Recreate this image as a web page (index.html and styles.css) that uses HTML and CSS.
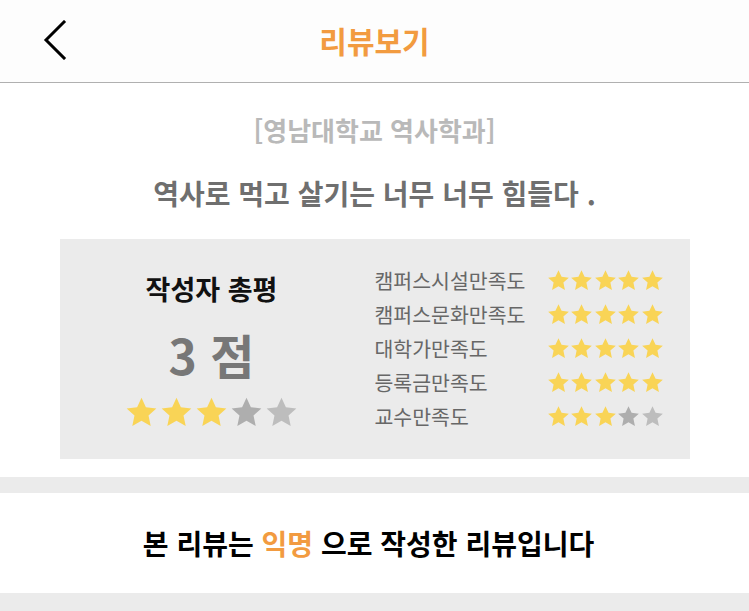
FILE: index.html
```html
<!DOCTYPE html>
<html lang="ko">
<head>
<meta charset="utf-8">
<link rel="stylesheet" href="styles.css">
</head>
<body>
<svg width="0" height="0" class="defs">
  <defs>
    <symbol id="star" viewBox="0 0 24 24">
      <polygon points="12,1.2 15.2,8.2 22.8,9 17.1,14.2 18.7,21.9 12,18 5.3,21.9 6.9,14.2 1.2,9 8.8,8.2"/>
    </symbol>
  </defs>
</svg>
<header class="topbar">
  <div class="back">
    <svg width="26" height="40" viewBox="0 0 26 40"><path d="M21 2 L3 20 L21 38" fill="none" stroke="#000" stroke-width="3" stroke-linecap="square" stroke-linejoin="miter"/></svg>
  </div>
  <h1 class="title">리뷰보기</h1>
  <div class="spacer"></div>
</header>
<main>
  <p class="school">[영남대학교 역사학과]</p>
  <p class="headline">역사로 먹고 살기는 너무 너무 힘들다 .</p>
  <section class="scorebox">
    <div class="overall">
      <div class="overall-label">작성자 총평</div>
      <div class="overall-score">3 점</div>
      <div class="stars big">
        <svg class="on"><use href="#star"/></svg><svg class="on"><use href="#star"/></svg><svg class="on"><use href="#star"/></svg><svg class="off1"><use href="#star"/></svg><svg class="off2"><use href="#star"/></svg>
      </div>
    </div>
    <div class="details">
      <div class="row"><span class="label">캠퍼스시설만족도</span><span class="stars small"><svg class="on"><use href="#star"/></svg><svg class="on"><use href="#star"/></svg><svg class="on"><use href="#star"/></svg><svg class="on"><use href="#star"/></svg><svg class="on"><use href="#star"/></svg></span></div>
      <div class="row"><span class="label">캠퍼스문화만족도</span><span class="stars small"><svg class="on"><use href="#star"/></svg><svg class="on"><use href="#star"/></svg><svg class="on"><use href="#star"/></svg><svg class="on"><use href="#star"/></svg><svg class="on"><use href="#star"/></svg></span></div>
      <div class="row"><span class="label">대학가만족도</span><span class="stars small"><svg class="on"><use href="#star"/></svg><svg class="on"><use href="#star"/></svg><svg class="on"><use href="#star"/></svg><svg class="on"><use href="#star"/></svg><svg class="on"><use href="#star"/></svg></span></div>
      <div class="row"><span class="label">등록금만족도</span><span class="stars small"><svg class="on"><use href="#star"/></svg><svg class="on"><use href="#star"/></svg><svg class="on"><use href="#star"/></svg><svg class="on"><use href="#star"/></svg><svg class="on"><use href="#star"/></svg></span></div>
      <div class="row"><span class="label">교수만족도</span><span class="stars small"><svg class="on"><use href="#star"/></svg><svg class="on"><use href="#star"/></svg><svg class="on"><use href="#star"/></svg><svg class="off1"><use href="#star"/></svg><svg class="off2"><use href="#star"/></svg></span></div>
    </div>
  </section>
</main>
<div class="band"></div>
<section class="notice">
  <p>본 리뷰는 <span class="accent">익명</span> 으로 작성한 리뷰입니다</p>
</section>
<div class="band last"></div>
</body>
</html>
```
FILE: styles.css
```css
html, body {
  margin: 0;
  padding: 0;
  background: #ffffff;
  font-family: "Noto Sans CJK KR", "Noto Sans", sans-serif;
  width: 749px;
  height: 611px;
  overflow: hidden;
}
.defs { position: absolute; }
.topbar {
  height: 82px;
  background: #fdfdfd;
  border-bottom: 1px solid #b0b0b0;
  display: grid;
  grid-template-columns: 1fr auto 1fr;
  align-items: center;
}
.back {
  padding-left: 43px;
  display: flex;
  align-items: center;
  padding-bottom: 2px;
}
.title {
  margin: 0;
  font-size: 30px;
  font-weight: 700;
  color: #f29b40;
  line-height: 40px;
  padding-bottom: 2px;
}
main {
  display: flex;
  flex-direction: column;
  align-items: center;
}
.school {
  margin: 30px 0 0;
  font-size: 26px;
  line-height: 34px;
  font-weight: 700;
  color: #b9b9b9;
}
.headline {
  margin: 28px 0 0;
  font-size: 28px;
  line-height: 36px;
  font-weight: 700;
  color: #6f6f6f;
}
.scorebox {
  margin-top: 28px;
  width: 630px;
  height: 220px;
  background: #ebebeb;
  display: flex;
  align-items: flex-start;
}
.overall {
  width: 304px;
  padding-top: 33px;
  display: flex;
  flex-direction: column;
  align-items: center;
}
.overall-label {
  font-size: 27px;
  line-height: 34px;
  font-weight: 700;
  color: #111;
}
.overall-score {
  margin-top: 20px;
  font-size: 48px;
  line-height: 56px;
  font-weight: 700;
  color: #777777;
}
.stars { display: flex; }
.stars svg { display: block; }
.stars .on { fill: #f9d456; }
.stars .off1 { fill: #aeaeae; }
.stars .off2 { fill: #bdbdbd; }
.stars.big {
  margin-top: 14px;
  gap: 2px;
}
.stars.big svg { width: 33px; height: 33px; }
.details {
  margin-left: 11px;
  padding-top: 24px;
  display: flex;
  flex-direction: column;
}
.row {
  display: flex;
  align-items: center;
  height: 34px;
}
.label {
  width: 172px;
  font-size: 20.5px;
  color: #676767;
  line-height: 34px;
}
.stars.small { gap: 0.5px; }
.stars.small svg { width: 23px; height: 23px; }
.band {
  margin-top: 18px;
  height: 16px;
  background: #ebebeb;
}
.band.last { margin-top: 0; height: 18px; }
.notice {
  height: 100px;
  display: flex;
  align-items: center;
  justify-content: center;
}
.notice p {
  margin: 0 0 0 -12px;
  font-size: 28px;
  font-weight: 700;
  color: #000;
  line-height: 36px;
}
.accent { color: #f29b40; }
```
